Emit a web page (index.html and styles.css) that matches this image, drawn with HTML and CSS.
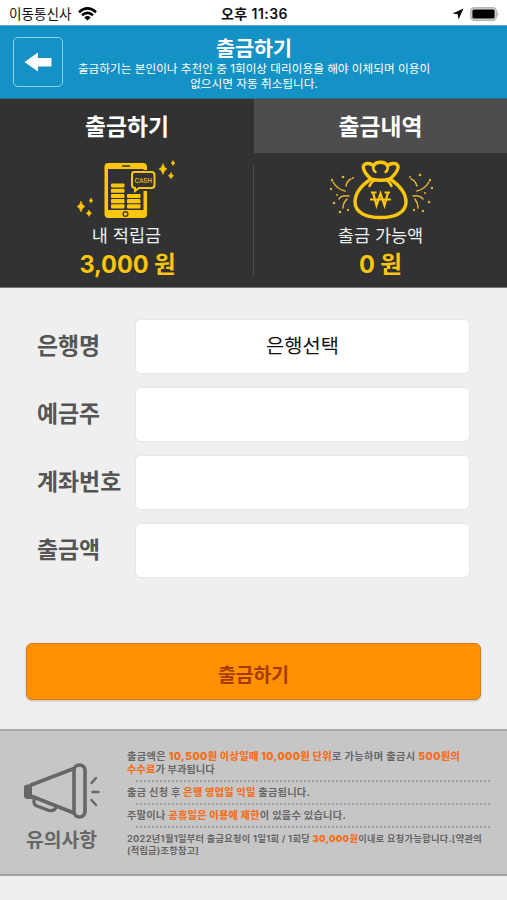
FILE: index.html
```html
<!DOCTYPE html>
<html lang="ko">
<head>
<meta charset="utf-8">
<title>출금하기</title>
<link rel="stylesheet" href="styles.css">
</head>
<body>
<div class="status">
  <div class="status-left"><span class="carrier">이동통신사</span>
    <svg class="wifi" viewBox="0 0 19 14"><g fill="none" stroke="#000" stroke-width="2.500"><path d="M1 5.200Q9.500-2.400 18 5.200"/><path d="M4 8.300Q9.500 3.400 15 8.300"/></g><path d="M6.300 10.400Q9.500 7.800 12.700 10.400L9.500 13.500z"/></svg>
  </div>
  <div class="clock">오후 11:36</div>
  <div class="status-right">
    <svg class="loc" viewBox="0 0 12 12"><path d="M11.500.5L6.500 11.500 5.800 6.300.5 5.600z"/></svg>
    <svg class="battery" viewBox="0 0 30 14"><rect x=".7" y=".7" width="25.600" height="12.600" rx="3.500" fill="#ddd" stroke="#b5b5b5" stroke-width="1.400"/><rect x="2.400" y="2.400" width="22.200" height="9.200" rx="1.500"/><path d="M27.500 4.500q2 2.500 0 5z" fill="#aaa"/></svg>
  </div>
</div>
<header class="header">
  <div class="back"><svg viewBox="0 0 28 20"><path fill="#fff" d="M.5 10L14 .5V6H26.500Q27.500 6 27.500 7V13.500Q27.500 14.500 26.500 14.500H14V19.500z"/></svg></div>
  <div class="heading">
    <h1>출금하기</h1>
    <p><span class="sub1">출금하기는 본인이나 추천인 중 1회이상 대리이용을 해야 이체되며 이용이</span><br><span class="sub2">없으시면 자동 취소됩니다.</span></p>
  </div>
</header>
<section class="account">
  <div class="tabs"><div class="tab">출금하기</div><div class="tab tab-off">출금내역</div></div>
  <div class="stats">
    <div class="stat">
      <svg class="art art-phone" viewBox="0 0 104 60">
        <g fill="#fcc60e">
          <path fill-rule="evenodd" d="M31.500 3H66Q70 3 70 7V54Q70 58 66 58H31.500Q27.500 58 27.500 54V7Q27.500 3 31.500 3zM31 9V50H66.500V9z"/>
          <rect x="34" y="23.500" width="13.500" height="4.100" rx="1"/><rect x="34" y="28.700" width="13.500" height="4.100" rx="1"/><rect x="34" y="33.900" width="13.500" height="4.100" rx="1"/><rect x="34" y="39.100" width="13.500" height="4.100" rx="1"/><rect x="34" y="44.300" width="13.500" height="4.100" rx="1"/>
          <rect x="50" y="33.900" width="13.500" height="4.100" rx="1"/><rect x="50" y="39.100" width="13.500" height="4.100" rx="1"/><rect x="50" y="44.300" width="13.500" height="4.100" rx="1"/>
          <path d="M86 3.500q1 4.500 4 5.500q-3 1-4 5.500q-1-4.500-4-5.500q3-1 4-5.500zM96 .5q.6 2 2 2.500q-1.400.5-2 2.500q-.6-2-2-2.500q1.400-.5 2-2.500zM94 12.500q.7 2.500 2.700 3.200q-2 .7-2.700 3.200q-.7-2.500-2.700-3.200q2-.7 2.700-3.200zM4 41q1 4.500 4 5.500q-3 1-4 5.500q-1-4.500-4-5.500q3-1 4-5.500zM14 38q.6 2 2 2.500q-1.400.5-2 2.500q-.6-2-2-2.500q1.400-.5 2-2.500zM12 50q.7 2.500 2.700 3.200q-2 .7-2.700 3.200q-.7-2.500-2.700-3.200q2-.7 2.700-3.200z" stroke="#fcc60e" stroke-width=".6"/>
        </g>
        <path d="M45 6h8" stroke="#333" stroke-width="1.500"/>
        <circle cx="48.500" cy="54" r="2.400" fill="none" stroke="#333" stroke-width="1.200"/>
        <path d="M57 10H75Q79 10 79 14V26Q79 31 75 31H63L56 34V30Q53 29 53 26V14Q53 10 57 10z" fill="#333"/>
        <path d="M57 12H74.500Q77.500 12 77.500 15V25Q77.500 28 74.500 28H62L58 31V28Q55 28 55 25V15Q55 12 57 12z" fill="#333" stroke="#fcc60e" stroke-width="2"/>
        <text x="57.500" y="22.500" textLength="17.500" lengthAdjust="spacingAndGlyphs" font-size="6.500" font-weight="500" fill="#fcc60e">CASH</text>
      </svg>
      <div class="stat-name">내 적립금</div><div class="stat-value v1">3,000 원</div>
    </div>
    <i class="rule"></i>
    <div class="stat">
      <svg class="art" viewBox="0 0 104 60">
        <g fill="none" stroke="#fcc60e" stroke-width="3.400" stroke-linejoin="round" stroke-linecap="round">
          <path d="M42 19C33 25 26 32 26 42C26 53 38 57.500 51.500 57.500S77 53 77 42C77 32 70 25 61 19"/>
          <path d="M42 19C32 10 33 4 38 3.500Q42 3 44.500 6Q46 2.200 51.500 2.200T58.500 6Q61 3 65 3.500C71 4 71 10 61 19Q51.500 21.500 42 19"/>
          <path d="M46.500 12Q43.500 10 44.500 6M56.500 12Q59.500 10 58.500 6" stroke-width="2.500"/>
          <path d="M46 20Q42 22 40.500 26M57 20Q61 22 62.500 26" stroke-width="2.500"/>
        </g>
        <path d="M42 32.500h5.500M55.500 32.500h5.500M44 32.500l3.500 13 4-12 4 12 3.500-13M41 39.500h21" fill="none" stroke="#fcc60e" stroke-width="2.200"/>
        <g fill="none" stroke="#e3b333" stroke-width="1.500" stroke-linecap="round">
          <path d="M4 22Q8 29 16 31M17 26Q18 21 22 19M20 36Q12 35 10 39M18 39Q14 43 14 48"/>
          <path d="M100 22Q96 29 88 31M88 26Q86 20 82 19M84 36Q91 35 94 39M86 39Q89 43 89 48"/>
        </g>
        <g fill="#e3b333"><circle cx="14" cy="17" r="1.300"/><circle cx="24" cy="18" r="1"/><circle cx="3" cy="20" r="1.200"/><circle cx="2" cy="29" r="1.200"/><circle cx="8" cy="35" r="1"/><circle cx="5" cy="43" r="1.300"/><circle cx="11" cy="52" r="1.300"/><circle cx="19" cy="50" r="1.200"/><circle cx="81" cy="17" r="1"/><circle cx="91" cy="15" r="1.300"/><circle cx="101" cy="20" r="1.200"/><circle cx="103" cy="28" r="1.200"/><circle cx="96" cy="33" r="1"/><circle cx="100" cy="42" r="1.300"/><circle cx="94" cy="51" r="1.200"/><circle cx="85" cy="50" r="1.200"/></g>
      </svg>
      <div class="stat-name">출금 가능액</div><div class="stat-value v2">0 원</div>
    </div>
  </div>
</section>
<main class="form">
  <div class="row"><label>은행명</label><div class="field">은행선택</div></div>
  <div class="row"><label>예금주</label><div class="field"></div></div>
  <div class="row"><label>계좌번호</label><div class="field"></div></div>
  <div class="row"><label>출금액</label><div class="field"></div></div>
  <button class="submit">출금하기</button>
</main>
<section class="notice">
  <div class="notice-left">
    <svg viewBox="0 0 76 56"><g fill="none" stroke="#666" stroke-width="3.600" stroke-linejoin="round" stroke-linecap="round"><path d="M7 22L50 5.500M7 33L50 50"/><rect x="50" y="2" width="11" height="52" rx="5.500"/><path d="M10 35v4Q10 42 13 43L25 47.500Q31 48.500 32 44" stroke-width="3.200"/><path d="M67.500 20l4.500-5M68.500 29h6M67.500 37l4.500 5" stroke-width="2.400"/></g><path fill="#666" d="M0 24Q0 21.500 4 21.500H8V36H4Q0 36 0 33z"/></svg>
    <div class="notice-title">유의사항</div>
  </div>
  <div class="notes">
    <div class="note n1"><span class="w1">출금액은 <b>10,500원 이상일때 10,000원 단위</b>로 가능하며 출금시 <b>500원의</b></span><br><span class="w2"><b>수수료</b>가 부과됩니다</span></div>
    <div class="note n2"><span class="w3">출금 신청 후 <b>은행 영업일 익일</b> 출금됩니다.</span></div>
    <div class="note n3"><span class="w4">주말이나 <b>공휴일은 이용에 제한</b>이 있을수 있습니다.</span></div>
    <div class="note n4"><span class="w5">2022년1월1일부터 출금요청이 1일1회 / 1회당 <b>30,000원</b>이내로 요청가능합니다.[약관의</span><br><span class="w6">(적립금)조항참고]</span></div>
  </div>
</section>
</body>
</html>
```

FILE: styles.css
```css
* { box-sizing: border-box; }
body { margin: 0; width: 507px; height: 900px; overflow: hidden; background: #efefef; font-family: Inter, "Noto Sans CJK KR", sans-serif; white-space: nowrap; }
svg { display: block; }
.status { height: 25px; background: #fff; display: grid; grid-template-columns: 1fr auto 1fr; align-items: center; padding: 2px 7px 0 9px; font-size: 14px; line-height: 22px; color: #111; }
.status-left, .status-right { display: flex; align-items: center; gap: 6px; }
.carrier { font-size: 13.600px; }
.wifi { width: 19px; height: 14px; }
.clock { font-weight: 600; font-size: 14px; letter-spacing: .45px; }
.status-right { justify-content: flex-end; }
.loc { width: 12px; height: 12px; }
.battery { width: 30px; height: 14px; }
.header { height: 74px; background: #1592c5; border-top: 1px solid #4dabcf; border-bottom: 1px solid #21718f; display: flex; color: #fff; padding-left: 13px; }
.back { width: 50px; height: 50px; margin-top: 11px; border: 1px solid #8bd0ea; border-radius: 5px; display: flex; align-items: center; justify-content: center; }
.back svg { width: 28px; height: 20px; }
.heading { width: 382px; text-align: center; padding-top: 10px; }
h1 { margin: 0; font-size: 20.700px; line-height: 25px; font-weight: 700; }
.heading p { margin: 0; font-size: 11.650px; line-height: 14.500px; padding-top: 1px; }
.account { height: 189px; background: #323232; color: #fff; border-bottom: 1px solid #777; }
.tabs { display: grid; grid-template-columns: 254px 253px; }
.tab { height: 54px; line-height: 56px; font-size: 22.800px; font-weight: 700; text-align: center; }
.tab-off { background: #4d4d4d; }
.stats { display: flex; }
.stat { width: 253px; display: flex; flex-direction: column; align-items: center; padding-top: 7px; }
.rule { width: 1px; height: 110px; margin-top: 13px; background: #4c4c4c; }
.art { width: 104px; height: 60px; }
.art-phone { margin-left: 5px; }
.stat-name { font-size: 17.500px; line-height: 24px; margin-top: 4px; color: #eee; }
.stat-value { font-size: 23.600px; line-height: 34px; font-weight: 700; color: #fcc60e; letter-spacing: -.1px; }
.v1 { margin-left: 2px; }
.form { height: 441px; padding: 31px 26px 0; }
.row { display: flex; align-items: center; height: 55px; margin-bottom: 13px; padding-left: 11px; }
label { width: 98px; color: #555; font-size: 22.900px; font-weight: 700; line-height: 35px; }
.field { width: 335px; height: 55px; background: #fff; border: 1px solid #e6e6e6; border-radius: 6px; text-align: center; line-height: 53px; font-size: 19.800px; color: #111; }
.submit { display: block; width: 455px; height: 57px; margin-top: 65px; border: 1px solid #d97a1e; border-radius: 6px; background: #ff9100; color: #a63c05; font-family: inherit; font-size: 19.300px; font-weight: 700; padding: 4px 0 0; box-shadow: 0 1px 2px #bbb; }
.notice { height: 147px; background: #c6c6c6; border-top: 2px solid #aaa; border-bottom: 2px solid #a0a0a0; display: flex; }
.notice-left { width: 127px; padding: 32px 0 0 24px; }
.notice-left svg { width: 76px; height: 56px; }
.notice-title { color: #666; font-weight: 700; font-size: 19.300px; line-height: 28px; margin: 7px 0 0 2px; }
.notes { width: 363px; font-size: 10.200px; color: #666; font-weight: 700; }
.note { line-height: 13px; background: repeating-linear-gradient(90deg, #a0a0a0 0 2px, transparent 2px 4px) 9px 100% / 100% 2px no-repeat; }
.note b { color: #f37021; }
.n1 { height: 51px; padding-top: 19px; }
.n2 { height: 23px; padding-top: 4px; }
.n3 { height: 23px; padding-top: 4px; }
.n4 { background: none; padding-top: 5px; font-size: 9.200px; line-height: 11.500px; }
.w1 { letter-spacing: .38px; }
.w2 { letter-spacing: .1px; }
.w3, .w4 { letter-spacing: .28px; }
.w5 { letter-spacing: .32px; }
.w6 { letter-spacing: .25px; }
```
